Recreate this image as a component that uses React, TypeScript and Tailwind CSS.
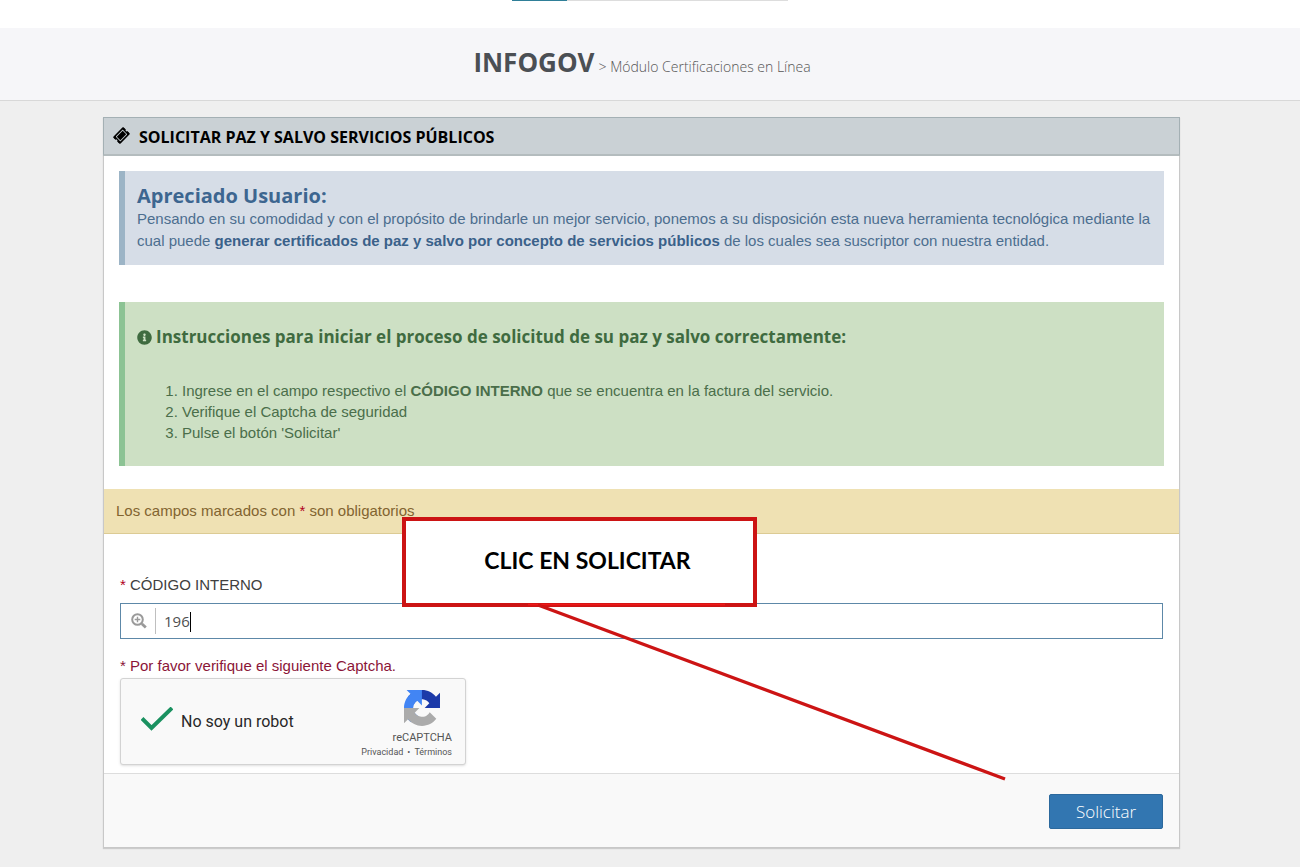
import { useState } from 'react';
import { FaInfoCircle, FaTicketAlt } from 'react-icons/fa';

const steps = [
  <>
    Ingrese en el campo respectivo el <strong>CÓDIGO INTERNO</strong> que se encuentra en la factura del servicio.
  </>,
  <>Verifique el Captcha de seguridad</>,
  <>Pulse el botón 'Solicitar'</>,
];

function ZoomInIcon() {
  return (
    <svg viewBox="0 0 16 16" className="h-4 w-4" fill="none" stroke="#9a9a9a" aria-hidden="true">
      <circle cx="6.5" cy="6.5" r="5.3" strokeWidth="2" />
      <path d="M10.8 10.8L14.8 14.6" strokeWidth="2.8" />
      <path d="M3.7 6.5h5.6M6.5 3.7v5.6" strokeWidth="1.4" />
    </svg>
  );
}

function RecaptchaLogo() {
  return (
    <svg viewBox="0 0 64 64" className="h-9 w-9" aria-hidden="true">
      <path
        fill="#1c3aa9"
        d="M64 31.955l-.033-1.37V4.687l-7.16 7.16C50.948 4.674 42.033.093 32.05.093c-10.4 0-19.622 4.96-25.458 12.64l11.736 11.86a15.55 15.55 0 0 1 4.754-5.334c2.05-1.6 4.952-2.906 8.968-2.906.485 0 .86.057 1.135.163 4.976.393 9.288 3.14 11.828 7.124l-8.307 8.307L64 31.953"
      />
      <path
        fill="#4285f4"
        d="M31.862.094l-1.37.033H4.594l7.16 7.16C4.58 13.147 0 22.06 0 32.046c0 10.4 4.96 19.622 12.64 25.458L24.5 45.768a15.55 15.55 0 0 1-5.334-4.754c-1.6-2.05-2.906-4.952-2.906-8.968 0-.485.057-.86.163-1.135.393-4.976 3.14-9.288 7.124-11.828l8.307 8.307L31.86.095"
      />
      <path
        fill="#ababab"
        d="M.001 32.045l.033 1.37v25.898l7.16-7.16c5.86 7.173 14.774 11.754 24.76 11.754 10.4 0 19.622-4.96 25.458-12.64l-11.736-11.86a15.55 15.55 0 0 1-4.754 5.334c-2.05 1.6-4.952 2.906-8.968 2.906-.485 0-.86-.057-1.135-.163-4.976-.393-9.288-3.14-11.828-7.124l8.307-8.307c-10.522.04-22.4.066-27.295-.005"
      />
    </svg>
  );
}

function Captcha() {
  const [checked, setChecked] = useState(true);

  return (
    <div className="flex h-[87px] w-[346px] items-center justify-between rounded-[3px] border border-[#d3d3d3] bg-[#f9f9f9] pr-[13px] pl-5 font-['Roboto',sans-serif] shadow-sm">
      <label className="relative flex items-center gap-2 text-base text-[#282828]">
        <input
          type="checkbox"
          checked={checked}
          onChange={(e) => setChecked(e.target.checked)}
          className="peer sr-only"
        />
        <svg viewBox="0 0 32 30" className="h-[30px] w-8 opacity-0 peer-checked:opacity-100" fill="none" aria-hidden="true">
          <path d="M1 11.5L10.5 21L31 1" stroke="#1a9160" strokeWidth="4" />
        </svg>
        No soy un robot
      </label>
      <div className="flex flex-col items-end pt-[5px]">
        <div className="flex flex-col items-center">
          <RecaptchaLogo />
          <span className="mt-1 text-[11px] leading-4 text-[#555555]">reCAPTCHA</span>
        </div>
        <div className="flex gap-1 text-[9px] leading-3 text-[#555555]">
          <a href="#privacidad">Privacidad</a>
          <span>•</span>
          <a href="#terminos">Términos</a>
        </div>
      </div>
    </div>
  );
}

/* Red note box with the pointer line towards the submit button */
function Callout() {
  return (
    <>
      <div className="absolute top-[400px] left-[298px] flex h-[90px] w-[355px] items-center justify-center border-4 border-[#cc1414] bg-white pb-1 pl-4 font-['Lato',sans-serif] text-[23px] font-bold text-black">
        CLIC EN SOLICITAR
      </div>
      <svg viewBox="0 0 480 180" className="pointer-events-none absolute top-[485px] left-[424px] h-[180px] w-[480px]" aria-hidden="true">
        <path d="M0 2.5H197" stroke="#f01818" strokeWidth="1.5" />
        <path d="M10 3L477 177" stroke="#cc1414" strokeWidth="3.4" />
      </svg>
    </>
  );
}

export default function App() {
  return (
    <div className="min-h-screen bg-[#efefef] font-['Liberation_Sans',Arial,sans-serif] text-[15px] leading-[22px]">
      <div className="flex h-7 justify-center bg-white">
        <div className="h-px w-[276px] bg-[#dddddd]">
          <div className="h-px w-[55px] bg-[#2f7f98]" />
        </div>
      </div>

      <header className="flex items-baseline justify-center gap-1 border-b border-[#d8d8d8] bg-[#f6f6f9] pt-4 pr-4 pb-5 font-['Open_Sans',sans-serif]">
        <h1 className="text-[26px] leading-9 font-bold text-[#4b4f54]">INFOGOV</h1>
        <p className="text-sm font-light text-[#555555]">&gt; Módulo Certificaciones en Línea</p>
      </header>

      <main className="pt-4 pr-[120px] pb-[18px] pl-[103px]">
        <form
          className="relative border border-t-0 border-[#c8c8c8] bg-white shadow-[0_1px_1px_#cccccc]"
          onSubmit={(e) => e.preventDefault()}
        >
          <h2 className="-mx-px flex h-[39px] items-center gap-[10px] border border-b-2 border-[#a4b0b4] border-b-[#b4bcbe] bg-[#cad1d5] px-[10px] pt-[2px] font-['Open_Sans',sans-serif] text-base font-bold text-black">
            <FaTicketAlt className="-mt-1 h-[15px] w-[15px] -rotate-45" />
            SOLICITAR PAZ Y SALVO SERVICIOS PÚBLICOS
          </h2>

          <section className="mx-[15px] mt-[15px] h-[94px] border-l-[6px] border-[#9cb4c6] bg-[#d6dde7] px-3 pt-[13px] text-[#4c6e8f]">
            <h3 className="font-['Open_Sans',sans-serif] text-xl leading-6 font-bold text-[#3d6690]">
              Apreciado Usuario:
            </h3>
            <p>
              Pensando en su comodidad y con el propósito de brindarle un mejor servicio, ponemos a su disposición esta
              nueva herramienta tecnológica mediante la cual puede{' '}
              <strong className="text-[#3a618a]">
                generar certificados de paz y salvo por concepto de servicios públicos
              </strong>{' '}
              de los cuales sea suscriptor con nuestra entidad.
            </p>
          </section>

          <section className="mx-[15px] mt-[37px] h-[164px] border-l-[6px] border-[#8cc394] bg-[#cde0c4] px-3 pt-6 text-[#4a6e4a]">
            <h3 className="flex items-center gap-1 font-['Open_Sans',sans-serif] text-[17px] font-bold text-[#3f6b40]">
              <FaInfoCircle className="h-[15px] w-[15px]" />
              Instrucciones para iniciar el proceso de solicitud de su paz y salvo correctamente:
            </h3>
            <ol className="mt-8 list-decimal pl-[45px] leading-[21px]">
              {steps.map((step, i) => (
                <li key={i}>{step}</li>
              ))}
            </ol>
          </section>

          <p className="mt-[23px] border-b border-[#dccb94] bg-[#efe1b3] px-3 py-[11px] text-[#826430]">
            Los campos marcados con <span className="text-[#b00020]">*</span> son obligatorios
          </p>

          <div className="px-4 pt-10 pb-2">
            <label htmlFor="codigo" className="block text-[#404040]">
              <span className="text-[#b00020]">*</span> CÓDIGO INTERNO
            </label>
            <div className="mt-[7px] flex h-9 items-center border border-[#5d88a8] bg-white px-[10px]">
              <ZoomInIcon />
              <div className="relative ml-2 flex flex-1 items-center border-l border-[#bfbfbf] pl-2">
                <input
                  id="codigo"
                  type="text"
                  defaultValue="196"
                  className="h-[26px] w-full bg-transparent font-['Open_Sans',sans-serif] text-[15px] text-[#505050] outline-none"
                />
                <span className="absolute top-1 left-[34px] h-5 w-px bg-black" />
              </div>
            </div>

            <p className="mt-4 text-[#8b1538]">
              <span>*</span> Por favor verifique el siguiente Captcha.
            </p>
            <div className="mt-px">
              <Captcha />
            </div>
          </div>

          <footer className="flex justify-end border-t border-[#dddddd] bg-[#f9f9f9] px-4 pt-5 pb-[18px]">
            <button
              type="submit"
              className="h-[35px] w-[114px] rounded-xs border border-[#2c699d] bg-[#3276b1] font-['Open_Sans',sans-serif] text-[17px] font-light text-white"
            >
              Solicitar
            </button>
          </footer>

          <Callout />
        </form>
      </main>
    </div>
  );
}
